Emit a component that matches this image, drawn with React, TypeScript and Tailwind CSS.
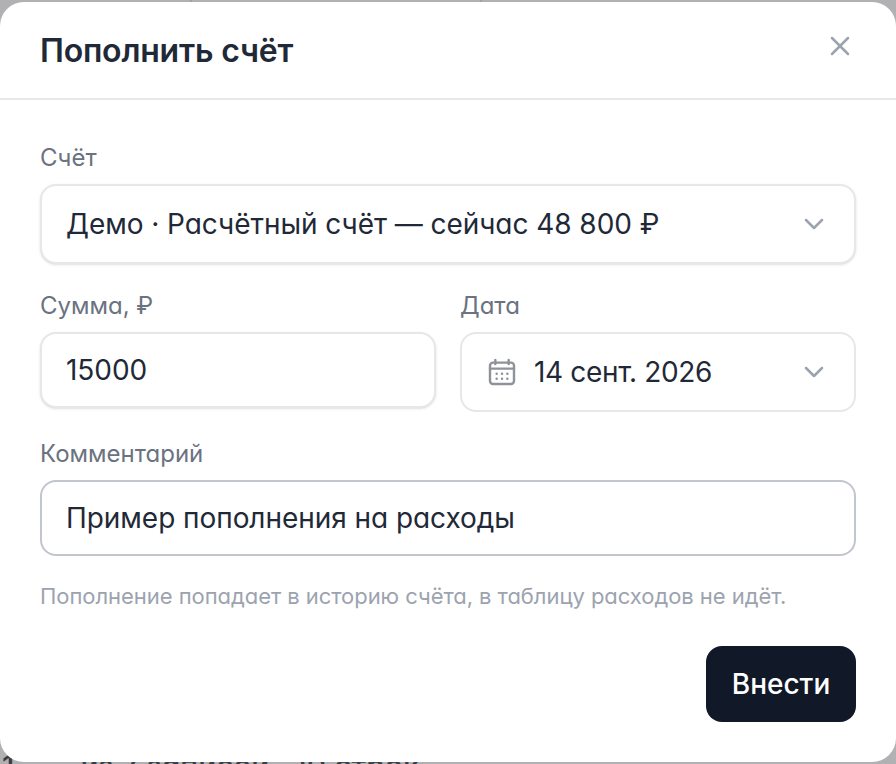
import { ChevronDown, X } from "lucide-react";

const fieldBase =
  "w-full rounded-[16px] bg-white text-[28px] leading-[36px] tracking-[-0.05px] text-[#1f2937] px-[24px] flex items-center";
const labelClass = "text-[24px] leading-[28px] text-[#6b7280] mb-[12px]";

function CalendarDots() {
  return (
    <svg viewBox="0 0 24 24" className="w-[32px] h-[32px] text-[#8f9399]" fill="none" stroke="currentColor" strokeWidth={1.8} strokeLinecap="round" strokeLinejoin="round">
      <path d="M7 3v3M17 3v3" />
      <rect x="3" y="5" width="18" height="16" rx="2.2" />
      <path d="M3 9.5h18" />
      <path d="M8 13.25h.01M12 13.25h.01M16 13.25h.01M8 17h.01M12 17h.01M16 17h.01" strokeWidth={1.9} />
    </svg>
  );
}

export default function App() {
  return (
    <div className="relative w-[896px] h-[764px] overflow-hidden bg-[#b1b1b3] [font-family:Inter,'Noto_Sans',sans-serif] [font-feature-settings:'cv11']">
      <div className="absolute left-[190px] top-0 w-[2px] h-[4px] bg-[#a0a0a6]" />
      <div className="absolute left-[480px] top-0 w-[2px] h-[4px] bg-[#a0a0a6]" />
      <div className="absolute left-[2px] top-[748px] flex gap-[66px] whitespace-nowrap text-[30px] leading-[36px] font-medium text-[#3a3d44]">
        <span>1</span>
        <span>из 7 записей · 10 строк</span>
      </div>
      <div className="absolute left-0 right-0 top-[2px] bottom-[2px] rounded-[24px] bg-white flex flex-col">
        <header className="relative h-[98px] shrink-0 border-b-2 border-[#e5e7eb] px-[40px] flex items-center justify-between">
          <h1 className="text-[32px] leading-[40px] pt-[2px] font-semibold tracking-[-0.2px] text-[#1f2937]">Пополнить счёт</h1>
          <X className="w-[32px] h-[32px] text-[#9ca3af] -mt-[8px]" strokeWidth={1.9} />
        </header>
        <div className="flex-1 px-[40px] pt-[44px] flex flex-col">
          <label className={labelClass}>Счёт</label>
          <div className={`${fieldBase} h-[80px] border-2 border-[#e5e7eb] shadow-sm justify-between`}>
            <span>Демо · Расчётный счёт — сейчас 48 800 ₽</span>
            <ChevronDown className="w-[32px] h-[32px] text-[#9ca3af]" strokeWidth={1.9} />
          </div>
          <div className="grid grid-cols-2 gap-[24px] mt-[28px]">
            <div className="flex flex-col">
              <label className={labelClass}>Сумма, ₽</label>
              <div className={`${fieldBase} h-[76px] border-2 border-[#e5e7eb] shadow-sm`}>15000</div>
            </div>
            <div className="flex flex-col">
              <label className={labelClass}>Дата</label>
              <div className={`${fieldBase} h-[80px] border-2 border-[#e5e7eb] justify-between`}>
                <span className="flex items-center gap-[16px] tracking-[-0.35px]">
                  <CalendarDots />
                  14 сент. 2026
                </span>
                <ChevronDown className="w-[32px] h-[32px] text-[#9ca3af]" strokeWidth={1.9} />
              </div>
            </div>
          </div>
          <label className={`${labelClass} mt-[28px]`}>Комментарий</label>
          <div className={`${fieldBase} h-[76px] border-2 border-[#c1c5cd]`}>Пример пополнения на расходы</div>
          <p className="text-[22px] leading-[28px] tracking-[-0.05px] text-[#9ca3af] mt-[26px]">
            Пополнение попадает в историю счёта, в таблицу расходов не идёт.
          </p>
          <div className="flex justify-end mt-[36px]">
            <button className="w-[150px] h-[76px] rounded-[16px] bg-[#111827] text-white text-[28px] font-medium">Внести</button>
          </div>
        </div>
      </div>
    </div>
  );
}
